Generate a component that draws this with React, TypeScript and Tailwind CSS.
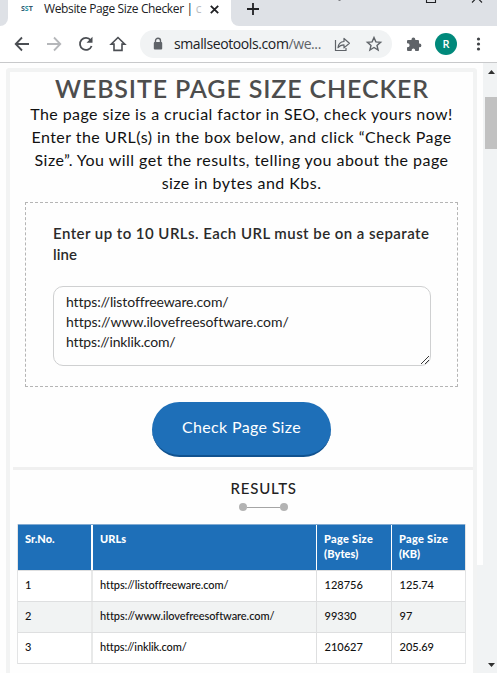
import type { ReactNode } from 'react';

const results = [
  { no: '1', url: 'https://listoffreeware.com/', bytes: '128756', kb: '125.74', urlClass: 'tracking-[-0.08px]' },
  { no: '2', url: 'https://www.ilovefreesoftware.com/', bytes: '99330', kb: '97', urlClass: 'tracking-[-0.06px]' },
  { no: '3', url: 'https://inklik.com/', bytes: '210627', kb: '205.69', urlClass: 'tracking-[-0.12px]' },
];

function Line({ children, className }: { children: ReactNode; className: string }) {
  return (
    <span className="block whitespace-nowrap">
      <span className={className}>{children}</span>
    </span>
  );
}

function TabStrip() {
  return (
    <div className="flex h-[26px] bg-[#dee1e6]">
      <div className="h-full w-2 bg-white">
        <div className="h-full rounded-br-lg bg-[#dee1e6]" />
      </div>
      <div className="flex h-full w-[223px] items-start bg-white font-['Open_Sans',sans-serif]">
        <span className="mt-[5px] ml-[13px] w-[15px] text-[7px] leading-2 font-bold text-[#35566b]">
          S<span className="text-[#2390a2]">S</span>T
        </span>
        <span className="mt-0 ml-2 w-[160px] text-[12px] leading-[18px] whitespace-nowrap text-[#202124]">
          <span className="tracking-[-0.36px]">Website Page Size Checker |</span> <span className="text-[#bcbec1]">c</span>
        </span>
        <svg className="mt-[5px] ml-[6px]" width="9" height="9" viewBox="0 0 9 9" stroke="#202124" strokeWidth="1.8">
          <path d="M.8.8l7.4 7.4M8.2.8L.8 8.2" />
        </svg>
      </div>
      <div className="h-full w-2 bg-white">
        <div className="h-full rounded-bl-lg bg-[#dee1e6]" />
      </div>
      <svg width="258" height="26" viewBox="239 0 258 26" fill="none" stroke="#202124">
        <path d="M247 9h12M253 3v12" strokeWidth="1.8" />
        <path d="M338.500 0h2" strokeWidth="1" />
        <path d="M426.500 0v2.500h9V0M472 2.500l5-5 5 5" strokeWidth="1.1" />
      </svg>
    </div>
  );
}

function Toolbar() {
  return (
    <div className="flex h-[37px] border-b border-[#c8c9cb] bg-white font-['Open_Sans',sans-serif]">
      <svg width="140" height="36" viewBox="0 26 140 36" fill="none" strokeWidth="1.8">
        <path d="M29 44H16M22 37.500L15.700 44l6.300 6.500" stroke="#4b4e53" />
        <path d="M47 44h13M54 37.500l6.300 6.500-6.300 6.500" stroke="#b5b7ba" />
        <path d="M90.700 40.200A6 6 0 1 0 91.600 46" stroke="#4b4e53" />
        <path d="M92.500 36.800v6h-6z" fill="#4b4e53" />
        <path d="M118 37.500l-6.800 6.600h2.800v6.300h8v-6.300h2.800z" stroke="#4b4e53" strokeWidth="1.600" />
      </svg>
      <div className="mt-1 flex h-7 w-[252px] items-center rounded-full bg-[#f1f3f4]">
        <svg className="ml-[13px]" width="10" height="14" viewBox="0 0 10 14">
          <path d="M2.500 6V3.800a2.500 2.500 0 0 1 5 0V6" fill="none" stroke="#5f6368" strokeWidth="1.4" />
          <rect x=".8" y="5" width="8.400" height="7.500" rx="1" fill="#5f6368" />
        </svg>
        <span className="ml-[11px] w-[158px] text-[14px] leading-5 tracking-[-0.4px] whitespace-nowrap text-[#202124]">
          smallseotools.com<span className="text-[#5f6368]">/we...</span>
        </span>
        <svg width="60" height="28" viewBox="332 30 60 28" fill="none" stroke="#5f6368" strokeWidth="1.200">
          <path d="M335.500 40v10.500h10.500v-2.500" />
          <path d="M344 38.500v3c-3.500.3-5.700 2.300-6 6.200 1.700-2.200 3.500-2.800 6-2.800v3l5.400-4.700z" strokeLinejoin="round" />
          <path
            d="M374 37.600l1.900 4.300 4.700.4-3.600 3.100 1.100 4.600-4.100-2.500-4.100 2.500 1.100-4.600-3.600-3.100 4.700-.4z"
            strokeWidth="1.400"
          />
        </svg>
      </div>
      <svg width="105" height="36" viewBox="392 26 105 36">
        <path
          d="M408 40h3.500v-.6a1.900 1.900 0 0 1 3.800 0v.6h2.700q1 0 1 1v2.500h.5a1.900 1.900 0 0 1 0 3.800h-.5v2.700q0 1-1 1h-2.800v-.6a1.800 1.800 0 0 0-3.600 0v.6H408q-1 0-1-1v-2.700h.6a2 2 0 0 0 0-4H407V41q0-1 1-1z"
          fill="#5f6368"
        />
        <circle cx="446" cy="44" r="11" fill="#00897b" />
        <text x="446" y="48" textAnchor="middle" fontSize="11" fontWeight="600" fill="#fff">R</text>
        <g fill="#3f4246">
          <circle cx="478.500" cy="39" r="1.600" />
          <circle cx="478.500" cy="44" r="1.600" />
          <circle cx="478.500" cy="49" r="1.600" />
        </g>
      </svg>
    </div>
  );
}

function UrlForm() {
  return (
    <div className="mx-[15px] mt-2 h-[185px] border border-dashed border-[#b5b5b5] px-[27px] pt-5">
      <label htmlFor="urls" className="block text-[15px] leading-[21px] font-semibold text-[#2a2a2a]">
        <Line className="tracking-[0.45px]">Enter up to 10 URLs. Each URL must be on a separate</Line>
        <Line className="tracking-[0.1px]">line</Line>
      </label>
      <div
        id="urls"
        className="relative mt-[21px] h-20 w-[378px] rounded-[10px] border border-[#cfd0d1] pt-[5px] pl-3 text-[14px] leading-5 text-[#212121]"
      >
        <Line className="tracking-[-0.1px]">https://listoffreeware.com/</Line>
        <Line className="tracking-[-0.02px]">https://www.ilovefreesoftware.com/</Line>
        <Line className="tracking-[-0.15px]">https://inklik.com/</Line>
        <svg className="absolute right-[1px] bottom-[1px]" width="8" height="8" viewBox="0 0 8 8" stroke="#222" strokeWidth=".9">
          <path d="M0 8l8-8M4 8l4-4" />
        </svg>
      </div>
    </div>
  );
}

function Results() {
  return (
    <section className="mt-[10px] ml-[3px] border-t-[3px] border-[#f0f0f0]">
      <h2 className="mt-2 ml-[217.5px] text-[15px] leading-5 font-medium text-[#222]">
        <Line className="tracking-[0.8px]">RESULTS</Line>
      </h2>
      <div className="mt-[5px] ml-[226px] flex w-[49px] items-center">
        <span className="size-2 rounded-full bg-[#b3b3b3]" />
        <span className="h-px flex-1 bg-[#a5a5a5]" />
        <span className="size-2 rounded-full bg-[#b3b3b3]" />
      </div>
      <div className="mt-[13px] ml-[4px] w-[449px] border-x border-[#e3e4e5] text-[11px] leading-[15px] text-[#111]">
        <div className="grid h-[46px] grid-cols-[75px_224px_75px_1fr] border-t border-[#82abd2] bg-[#1e6fb8] font-black text-white">
          <div className="border-r-2 border-white pt-1.5 pl-[7px]"><Line className="tracking-[0px]">Sr.No.</Line></div>
          <div className="border-r border-white pt-1.5 pl-[7px]"><Line className="tracking-[0.1px]">URLs</Line></div>
          <div className="border-r border-white pt-1.5 pl-[7px]">
            <Line className="tracking-[0.3px]">Page Size</Line>
            <Line className="tracking-[0.1px]">(Bytes)</Line>
          </div>
          <div className="pt-1.5 pl-[7px]">
            <Line className="tracking-[0.3px]">Page Size</Line>
            <Line className="tracking-[0px]">(KB)</Line>
          </div>
        </div>
        <div className="border-t border-[#dedfe0]">
          {results.map((row) => (
            <div
              key={row.no}
              className="grid h-[31px] grid-cols-[75px_224px_75px_1fr] border-b border-[#dedfe0] leading-[28px] font-medium odd:bg-white even:bg-[#f1f3f3]"
            >
              <div className="border-r-2 border-[#e8e9e9] pl-[7px]">{row.no}</div>
              <div className="border-r border-[#dedfe0] pl-[7px]">
                <Line className={row.urlClass}>{row.url}</Line>
              </div>
              <div className="border-r border-[#dedfe0] pl-[7.5px]">{row.bytes}</div>
              <div className="pl-[7.5px]">{row.kb}</div>
            </div>
          ))}
        </div>
      </div>
    </section>
  );
}

function Scrollbar() {
  return (
    <div className="flex w-[14px] flex-col bg-[#f1f3f4]">
      <svg className="mt-[7px] ml-[5px]" width="7" height="4" viewBox="0 0 7 4">
        <path d="M0 4l3.500-4L7 4z" fill="#303030" />
      </svg>
      <div className="mt-[23px] ml-[2px] h-[52px] w-3 bg-[#c1c1c1]" />
      <svg className="mt-auto mb-[6px] ml-[5px]" width="7" height="4" viewBox="0 0 7 4">
        <path d="M0 0l3.500 4L7 0z" fill="#303030" />
      </svg>
    </div>
  );
}

export default function App() {
  return (
    <div className="h-[673px] w-[497px] overflow-hidden bg-[#fefefe]">
      <TabStrip />
      <Toolbar />
      <div className="flex h-[610px]">
        <main className="mt-[5px] ml-[6px] w-[471px] rounded-t border-4 border-b-0 border-[#f2f3f3] bg-[#fefefe] font-['Lato',sans-serif]">
          <h1 className="mt-[2px] ml-[45px] text-[25px] leading-7 font-semibold text-[#4d4d4d]">
            <Line className="tracking-[0.85px]">WEBSITE PAGE SIZE CHECKER</Line>
          </h1>
          <p className="flex flex-col items-center text-[16px] leading-[23px] text-[#111]">
            <Line className="tracking-[0.43px]">The page size is a crucial factor in SEO, check yours now!</Line>
            <Line className="tracking-[0.46px]">Enter the URL(s) in the box below, and click “Check Page</Line>
            <Line className="tracking-[0.46px]">Size”. You will get the results, telling you about the page</Line>
            <Line className="tracking-[0.46px]">size in bytes and Kbs.</Line>
          </p>
          <UrlForm />
          <button className="mt-[15px] ml-[142px] block h-[55px] w-[179px] rounded-full border-b-2 border-[#10528f] bg-[#1e6fb8] pb-1 text-center text-[16px] text-white">
            <Line className="tracking-[0.33px]">Check Page Size</Line>
          </button>
          <Results />
        </main>
        <div className="flex w-[6px] flex-col">
          <div className="h-[502px]" />
          <div className="flex-1 bg-[#f1f3f4]" />
        </div>
        <Scrollbar />
      </div>
    </div>
  );
}
